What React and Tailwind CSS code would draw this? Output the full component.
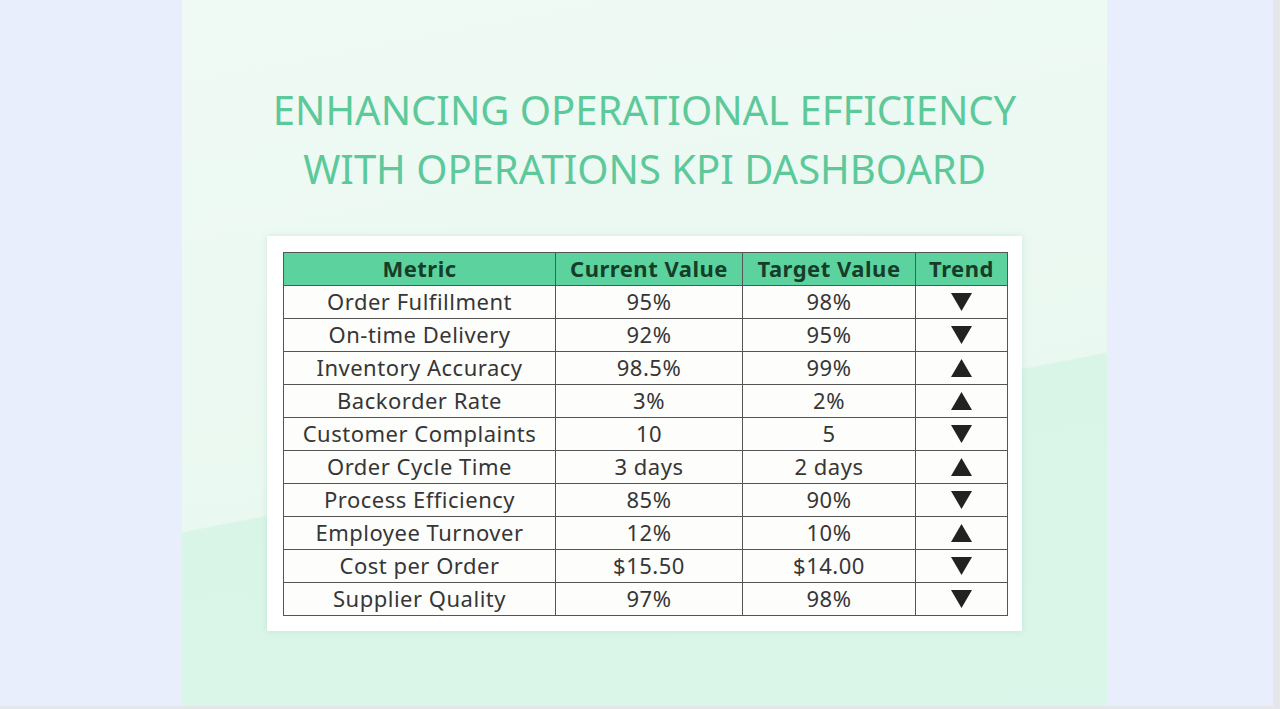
const rows = [
  ["Order Fulfillment", "95%", "98%", "down"],
  ["On-time Delivery", "92%", "95%", "down"],
  ["Inventory Accuracy", "98.5%", "99%", "up"],
  ["Backorder Rate", "3%", "2%", "up"],
  ["Customer Complaints", "10", "5", "down"],
  ["Order Cycle Time", "3 days", "2 days", "up"],
  ["Process Efficiency", "85%", "90%", "down"],
  ["Employee Turnover", "12%", "10%", "up"],
  ["Cost per Order", "$15.50", "$14.00", "down"],
  ["Supplier Quality", "97%", "98%", "down"],
]

function Trend({ dir }) {
  return (
    <svg width="21" height="18" viewBox="0 0 21 18" className="mx-auto block">
      {dir === "up" ? (
        <polygon points="10.5,0 21,18 0,18" fill="#222" />
      ) : (
        <polygon points="0,0 21,0 10.5,18" fill="#222" />
      )}
    </svg>
  )
}

export default function App() {
  return (
    <div className="h-[709px] w-[1280px] overflow-hidden bg-[#e4e6ea] font-['Noto_Sans',sans-serif]">
      <div className="flex h-[706px] w-[1273px] bg-[#e8eefc]">
        <div className="w-[182px]" />
        <div className="flex w-[925px] flex-col items-center bg-[linear-gradient(169deg,#f0faf5_0%,#e9f8f0_60%,#d9f5e8_60.2%,#daf5e9_100%)]">
          <h1 className="mt-[80px] text-center text-[40px] leading-[59px] text-[#5dc99a]">
            ENHANCING OPERATIONAL EFFICIENCY
            <br />
            WITH OPERATIONS KPI DASHBOARD
          </h1>
          <div className="mt-[38px] w-[755px] bg-white p-[16px] pr-[15px] pb-[15px] shadow-[0_0_6px_rgba(120,190,160,0.25)]">
            <table className="w-[724px] table-fixed border-collapse text-center text-[22px] tracking-[0.5px] text-[#363636]">
              <colgroup>
                <col className="w-[272px]" />
                <col className="w-[187px]" />
                <col className="w-[173px]" />
                <col className="w-[92px]" />
              </colgroup>
              <thead>
                <tr className="h-[33px] bg-[#5cd29e] font-bold text-[#163d28]">
                  <th className="border border-[#555] p-0 pb-[3px] leading-[28px]">Metric</th>
                  <th className="border border-[#555] p-0 pb-[3px] leading-[28px]">Current Value</th>
                  <th className="border border-[#555] p-0 pb-[3px] leading-[28px]">Target Value</th>
                  <th className="border border-[#555] p-0 pb-[3px] leading-[28px]">Trend</th>
                </tr>
              </thead>
              <tbody>
                {rows.map(([metric, current, target, dir]) => (
                  <tr key={metric} className="h-[33px] bg-[#fdfdfc]">
                    <td className="border border-[#555] p-0 pb-[3px] leading-[28px]">{metric}</td>
                    <td className="border border-[#555] p-0 pb-[3px] leading-[28px]">{current}</td>
                    <td className="border border-[#555] p-0 pb-[3px] leading-[28px]">{target}</td>
                    <td className="border border-[#555] p-0">
                      <Trend dir={dir} />
                    </td>
                  </tr>
                ))}
              </tbody>
            </table>
          </div>
        </div>
        <div className="flex-1" />
      </div>
    </div>
  )
}
